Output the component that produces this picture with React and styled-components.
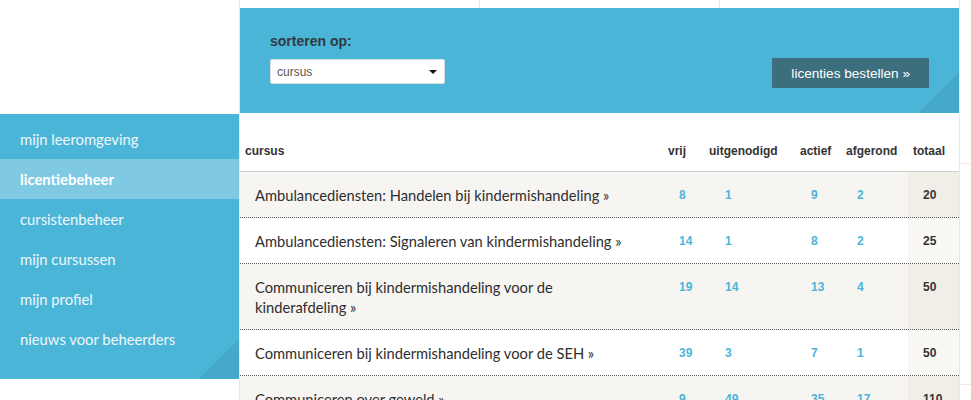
import React from "react";
import styled, { createGlobalStyle } from "styled-components";

const BLUE = "#4bb5d7";
const BLUE_DARK = "#46a9ca";
const BLUE_ACTIVE = "#80c9e3";
const TEXT = "#333";
const GRID_LINE = "#ece9e4";

const GlobalStyle = createGlobalStyle`
  html, body {
    margin: 0;
    padding: 0;
  }
  body {
    background-color: #fff;
    background-image: repeating-linear-gradient(
      to right,
      transparent 0 239px,
      ${GRID_LINE} 239px 240px
    );
    font-family: "Liberation Sans", Arial, sans-serif;
    color: ${TEXT};
  }
`;

const courses = [
  { name: "Ambulancediensten: Handelen bij kindermishandeling »", vrij: 8, uitgenodigd: 1, actief: 9, afgerond: 2, totaal: 20 },
  { name: "Ambulancediensten: Signaleren van kindermishandeling »", vrij: 14, uitgenodigd: 1, actief: 8, afgerond: 2, totaal: 25 },
  { name: "Communiceren bij kindermishandeling voor de kinderafdeling »", vrij: 19, uitgenodigd: 14, actief: 13, afgerond: 4, totaal: 50 },
  { name: "Communiceren bij kindermishandeling voor de SEH »", vrij: 39, uitgenodigd: 3, actief: 7, afgerond: 1, totaal: 50 },
  { name: "Communiceren over geweld »", vrij: 9, uitgenodigd: 49, actief: 35, afgerond: 17, totaal: 110 },
];

const menu = [
  "mijn leeromgeving",
  "licentiebeheer",
  "cursistenbeheer",
  "mijn cursussen",
  "mijn profiel",
  "nieuws voor beheerders",
];

const columns = [
  { key: "vrij", label: "vrij", indent: 16 },
  { key: "uitgenodigd", label: "uitgenodigd", indent: 21 },
  { key: "actief", label: "actief", indent: 16 },
  { key: "afgerond", label: "afgerond", indent: 16 },
];

export default function App() {
  return (
    <>
      <GlobalStyle />
      <Page>
        <Sidebar>
          {menu.map((label, idx) => (
            <MenuItem key={label} $active={idx === 1}>
              {label}
            </MenuItem>
          ))}
        </Sidebar>
        <Main>
          <Toolbar>
            <SortGroup>
              <SortLabel>sorteren op:</SortLabel>
              <Select>
                <span>cursus</span>
                <Caret />
              </Select>
            </SortGroup>
            <OrderButton>licenties bestellen »</OrderButton>
          </Toolbar>
          <Table>
            <HeadRow>
              <HeadCell>cursus</HeadCell>
              {columns.map((col) => (
                <HeadCell key={col.key}>{col.label}</HeadCell>
              ))}
              <HeadCell>totaal</HeadCell>
            </HeadRow>
            {courses.map((course, idx) => (
              <Row key={course.name} $odd={idx % 2 === 0}>
                <CourseCell>{course.name}</CourseCell>
                {columns.map((col) => (
                  <NumberCell key={col.key} $indent={col.indent}>
                    {course[col.key]}
                  </NumberCell>
                ))}
                <TotalCell $odd={idx % 2 === 0}>{course.totaal}</TotalCell>
              </Row>
            ))}
          </Table>
        </Main>
        <Aside>
          <AsideBlock $height={155} />
          <AsideBlock $height={220} />
        </Aside>
      </Page>
    </>
  );
}

const Page = styled.div`
  display: flex;
  align-items: flex-start;
  padding-top: 8px;
  height: 392px;
  overflow: hidden;
`;

const Sidebar = styled.nav`
  position: relative;
  width: 239px;
  margin-top: 106px;
  margin-right: 1px;
  padding: 5px 0 20px;
  background-color: ${BLUE};
  &::after {
    content: "";
    position: absolute;
    right: 0;
    bottom: 0;
    border-style: solid;
    border-width: 0 0 40px 40px;
    border-color: transparent transparent ${BLUE_DARK} transparent;
  }
`;

const MenuItem = styled.div`
  height: 40px;
  line-height: 40px;
  padding-left: 20px;
  font-family: Lato, "Open Sans", sans-serif;
  font-size: 14.8px;
  font-weight: ${(p) => (p.$active ? 700 : 400)};
  color: ${(p) => (p.$active ? "#fff" : "#eef8fc")};
  background-color: ${(p) => (p.$active ? BLUE_ACTIVE : "transparent")};
`;

const Main = styled.main`
  width: 719px;
  background-color: #fff;
`;

const Toolbar = styled.div`
  position: relative;
  display: flex;
  justify-content: space-between;
  align-items: flex-start;
  height: 105px;
  box-sizing: border-box;
  padding: 25px 30px 0;
  background-color: ${BLUE};
  &::after {
    content: "";
    position: absolute;
    right: 0;
    bottom: 0;
    border-style: solid;
    border-width: 0 0 41px 41px;
    border-color: transparent transparent ${BLUE_DARK} transparent;
  }
`;

const SortGroup = styled.div`
  display: flex;
  flex-direction: column;
`;

const SortLabel = styled.label`
  font-size: 14px;
  line-height: 17px;
  font-weight: 700;
  color: #2f3a3e;
  margin-bottom: 9px;
`;

const Select = styled.div`
  display: flex;
  align-items: center;
  justify-content: space-between;
  width: 175px;
  height: 25px;
  box-sizing: border-box;
  padding: 0 7px 0 6px;
  background-color: #fff;
  border: 1px solid #d6dde0;
  border-radius: 2px;
  font-size: 12px;
  color: #555;
`;

const Caret = styled.span`
  width: 0;
  height: 0;
  border-style: solid;
  border-width: 4px 4px 0 4px;
  border-color: #111 transparent transparent transparent;
`;

const OrderButton = styled.button`
  margin-top: 25px;
  height: 30px;
  padding: 0 19px;
  border: 0;
  background-color: #3d6e7d;
  color: #fff;
  font-family: "Liberation Sans", Arial, sans-serif;
  font-size: 13.6px;
  cursor: pointer;
`;

const Table = styled.div`
  display: flex;
  flex-direction: column;
`;

const GRID = "423px 41px 91px 46px 67px 51px";

const HeadRow = styled.div`
  display: grid;
  grid-template-columns: ${GRID};
  border-bottom: 1px solid #cfcfcf;
`;

const HeadCell = styled.div`
  padding: 31px 0 12px 5px;
  font-size: 12px;
  line-height: 15px;
  font-weight: 700;
  color: ${TEXT};
  white-space: nowrap;
`;

const Row = styled.div`
  display: grid;
  grid-template-columns: ${GRID};
  background-color: ${(p) => (p.$odd ? "#f7f5f2" : "#fff")};
  border-bottom: 1px dotted #555;
`;

const CourseCell = styled.div`
  padding: 13px 40px 12px 15px;
  font-family: Lato, "Open Sans", sans-serif;
  font-size: 14.7px;
  line-height: 20px;
  color: #2e2e2e;
`;

const NumberCell = styled.div`
  padding: 13px 0 12px ${(p) => p.$indent}px;
  font-size: 12px;
  line-height: 20px;
  font-weight: 700;
  color: ${BLUE};
`;

const TotalCell = styled.div`
  padding: 13px 0 12px 15px;
  font-size: 12px;
  line-height: 20px;
  font-weight: 700;
  color: ${TEXT};
  background-color: ${(p) => (p.$odd ? "#f1eee8" : "#f9f8f5")};
`;

const Aside = styled.aside`
  flex: 1;
  margin-left: 2px;
  display: flex;
  flex-direction: column;
`;

const AsideBlock = styled.div`
  height: ${(p) => p.$height}px;
  border-bottom: 1px solid ${GRID_LINE};
  background-color: #fff;
`;
